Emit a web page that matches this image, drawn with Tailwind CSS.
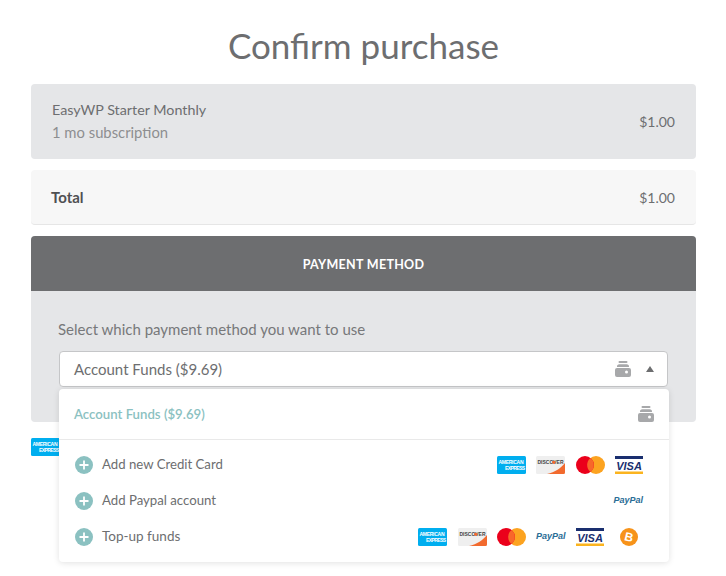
<!DOCTYPE html>
<html lang="en">
<head>
  <meta charset="UTF-8">
  <meta name="viewport" content="width=device-width, initial-scale=1.0">
  <title>Confirm purchase</title>
  <script src="https://cdn.jsdelivr.net/npm/@tailwindcss/browser@4"></script>
</head>
<body class="bg-white font-['Lato','Liberation_Sans',sans-serif] text-[#6d6e70] min-h-screen">

  <!-- shared icons -->
  <svg class="hidden">
    <symbol id="wallet" viewBox="0 0 16 16">
      <rect x="3.500" y="0" width="9" height="2" rx="1" fill="#a7a8aa"/>
      <path d="M2 6a2.500 2.500 0 0 1 2.500-2.700h7A2.500 2.500 0 0 1 14 6z" fill="#a7a8aa"/>
      <path d="M2 7h12a2 2 0 0 1 2 2v5a2 2 0 0 1-2 2H2a2 2 0 0 1-2-2V9a2 2 0 0 1 2-2z" fill="#a7a8aa"/>
      <circle cx="11.500" cy="11" r="1.500" fill="#fff"/>
    </symbol>
    <symbol id="amex" viewBox="0 0 29 18">
      <rect width="29" height="18" rx="1.500" fill="#00aeef"/>
      <text x="14" y="7.500" text-anchor="middle" font-family="Liberation Sans" font-size="5" font-weight="700" fill="#fff" textLength="25">AMERICAN</text>
      <text x="18" y="13.500" text-anchor="middle" font-family="Liberation Sans" font-size="5" font-weight="700" fill="#fff" textLength="20">EXPRESS</text>
    </symbol>
    <symbol id="discover" viewBox="0 0 29 18">
      <rect width="29" height="18" rx="1.500" fill="#efefef"/>
      <path d="M29 7v9.500a1.500 1.500 0 0 1-1.500 1.500H11C19 16 25 12 29 7z" fill="#f26a2e"/>
      <text x="14.500" y="8" text-anchor="middle" font-family="Liberation Sans" font-size="5" font-weight="700" fill="#444" textLength="26">DISCOVER</text>
      <circle cx="17.800" cy="6.300" r="1.600" fill="#f26a2e"/>
    </symbol>
    <symbol id="mastercard" viewBox="0 0 29 18">
      <circle cx="20" cy="9" r="9" fill="#fca320"/>
      <circle cx="9" cy="9" r="9" fill="#eb001b"/>
      <path d="M14.500 2a9 9 0 0 1 0 14 9 9 0 0 1 0-14z" fill="#f8672a"/>
    </symbol>
    <symbol id="visa" viewBox="0 0 28 18">
      <rect width="28" height="3" fill="#1a2f6f"/>
      <rect y="15.500" width="28" height="2.500" fill="#fbb41f"/>
      <text x="14" y="13.500" text-anchor="middle" font-family="Liberation Sans" font-size="11" font-weight="700" font-style="italic" fill="#1a2f6f">VISA</text>
    </symbol>
    <symbol id="plus" viewBox="0 0 18 18">
      <circle cx="9" cy="9" r="9" fill="#8bc1c1"/>
      <path d="M9 4.500v9M4.500 9h9" stroke="#fff" stroke-width="1.800"/>
    </symbol>
  </svg>

  <div class="w-[726px] pl-[31px] pr-[30px]">
    <h1 class="text-[35px] leading-[42px] pt-[24px] pb-[18px] text-center text-[#6d6e70]">Confirm purchase</h1>

    <!-- order line -->
    <div class="h-[75px] bg-[#e5e6e8] rounded-[4px] pl-[21px] pr-[21px] pb-[1px] flex items-center justify-between">
      <div>
        <p class="text-[14.300px] leading-[22px] text-[#6d6e70]">EasyWP Starter Monthly</p>
        <p class="text-[14.800px] leading-[22px] text-[#8d8e90]">1 mo subscription</p>
      </div>
      <span class="text-[14px]">$1.00</span>
    </div>

    <!-- total -->
    <div class="h-[55px] mt-[11px] bg-[#f7f7f7] border-b border-[#e6e6e6] rounded-[4px] pl-[20px] pr-[21px] flex items-center justify-between">
      <span class="text-[15px] font-bold text-[#4f5052]">Total</span>
      <span class="text-[14px]">$1.00</span>
    </div>

    <!-- payment method -->
    <div class="mt-[11px] h-[186px] bg-[#e5e6e8] rounded-[4px]">
      <div class="h-[55px] pt-[4px] bg-[#6d6e70] rounded-t-[4px] flex items-center justify-center text-white text-[12.500px] font-bold tracking-[0.3px]">PAYMENT METHOD</div>
      <div class="px-[28px] pt-[28px]">
        <p class="text-[15px] leading-[20px] -ml-[1px] text-[#77787a]">Select which payment method you want to use</p>
        <div class="relative mt-[12px]">
          <div class="h-[36px] bg-white border border-[#c5c6c8] rounded-[4px] pl-[14px] pr-[13px] flex items-center justify-between">
            <span class="text-[15px] text-[#6d6e70]">Account Funds ($9.69)</span>
            <div class="flex items-center gap-[15px]">
              <svg class="w-[16px] h-[16px]"><use href="#wallet"/></svg>
              <svg class="w-[8px] h-[6px]" viewBox="0 0 8 6"><path d="M4 0l4 6H0z" fill="#6d6e70"/></svg>
            </div>
          </div>

          <!-- dropdown menu -->
          <div class="absolute left-0 top-[38px] w-[610px] h-[173px] bg-white rounded-[4px] shadow-[0_1px_6px_rgba(0,0,0,0.12)] z-10">
            <div class="h-[51px] border-b border-[#e9e9e9] pl-[15px] pr-[15px] flex items-center justify-between">
              <span class="pt-[2px] text-[13.200px] font-semibold text-[#8bc1c1]">Account Funds ($9.69)</span>
              <svg class="w-[16px] h-[16px]"><use href="#wallet"/></svg>
            </div>
            <div class="pt-[7px]">
              <div class="h-[36px] pl-[16px] pr-[26px] flex items-center">
                <svg class="w-[18px] h-[18px]"><use href="#plus"/></svg>
                <span class="ml-[9px] pb-[1px] text-[13.200px] text-[#6d6e70]">Add new Credit Card</span>
                <div class="ml-auto flex items-center">
                  <svg class="w-[29px] h-[18px]"><use href="#amex"/></svg>
                  <svg class="ml-[10px] w-[29px] h-[18px]"><use href="#discover"/></svg>
                  <svg class="ml-[11px] w-[29px] h-[18px]"><use href="#mastercard"/></svg>
                  <svg class="ml-[10px] w-[28px] h-[18px]"><use href="#visa"/></svg>
                </div>
              </div>
              <div class="h-[36px] pl-[16px] pr-[26px] flex items-center">
                <svg class="w-[18px] h-[18px]"><use href="#plus"/></svg>
                <span class="ml-[9px] pb-[1px] text-[13.200px] text-[#6d6e70]">Add Paypal account</span>
                <span class="ml-auto text-[9px] font-bold italic text-[#2a6d96] font-['Liberation_Sans',sans-serif]">PayPal</span>
              </div>
              <div class="h-[36px] pl-[16px] pr-[31px] flex items-center">
                <svg class="w-[18px] h-[18px]"><use href="#plus"/></svg>
                <span class="ml-[9px] pb-[1px] text-[13.500px] text-[#6d6e70]">Top-up funds</span>
                <div class="ml-auto flex items-center">
                  <svg class="w-[29px] h-[18px]"><use href="#amex"/></svg>
                  <svg class="ml-[11px] w-[29px] h-[18px]"><use href="#discover"/></svg>
                  <svg class="ml-[10px] w-[29px] h-[18px]"><use href="#mastercard"/></svg>
                  <span class="ml-[10px] w-[29px] text-[9px] font-bold italic text-[#2a6d96] font-['Liberation_Sans',sans-serif]">PayPal</span>
                  <svg class="ml-[11px] w-[28px] h-[18px]"><use href="#visa"/></svg>
                  <svg class="ml-[16px] w-[18px] h-[18px]" viewBox="0 0 18 18">
                    <circle cx="9" cy="9" r="9" fill="#f7931a"/>
                    <text x="9" y="13.300" text-anchor="middle" transform="rotate(14 9 9)" font-family="Liberation Sans" font-size="12" font-weight="700" fill="#fff">B</text>
                  </svg>
                </div>
              </div>
            </div>
          </div>
        </div>
      </div>
    </div>

    <!-- logo left behind the open menu -->
    <svg class="mt-[16px] w-[29px] h-[18px]"><use href="#amex"/></svg>
  </div>

</body>
</html>
